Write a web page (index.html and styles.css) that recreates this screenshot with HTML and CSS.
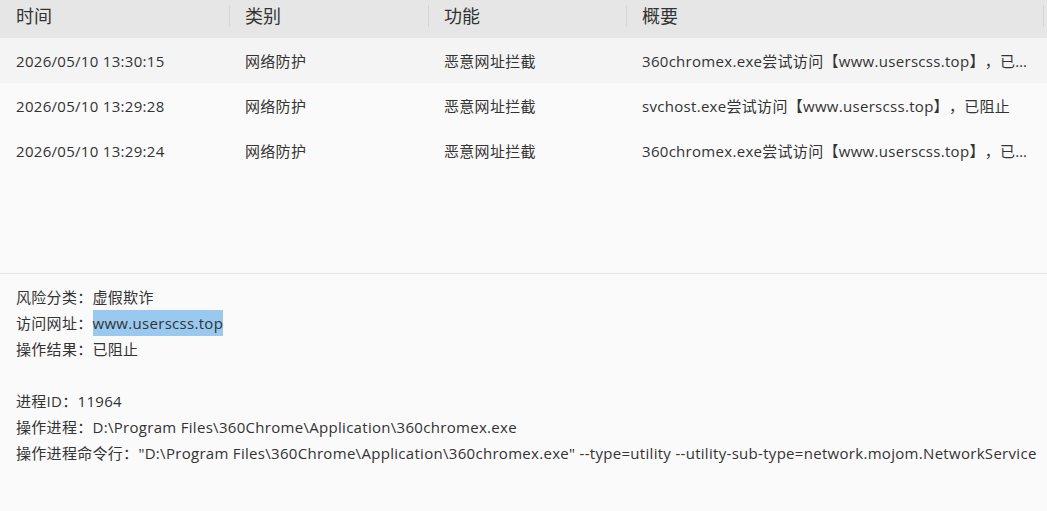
FILE: index.html
```html
<!DOCTYPE html>
<html lang="zh-CN">
  <head>
    <meta charset="UTF-8" />
    <meta name="viewport" content="width=device-width, initial-scale=1.0" />
    <title>防护日志</title>
    <link rel="stylesheet" href="styles.css">
  </head>

  <body>
    <div class="log-list">
      <div class="log-head">
        <div class="th first">时间</div>
        <div class="th">类别</div>
        <div class="th">功能</div>
        <div class="th">概要</div>
      </div>
      <div class="log-row active">
        <div class="td">2026/05/10 13:30:15</div>
        <div class="td">网络防护</div>
        <div class="td">恶意网址拦截</div>
        <div class="td">360chromex.exe尝试访问【www.userscss.top】，已阻止</div>
      </div>
      <div class="log-row">
        <div class="td">2026/05/10 13:29:28</div>
        <div class="td">网络防护</div>
        <div class="td">恶意网址拦截</div>
        <div class="td">svchost.exe尝试访问【www.userscss.top】，已阻止</div>
      </div>
      <div class="log-row">
        <div class="td">2026/05/10 13:29:24</div>
        <div class="td">网络防护</div>
        <div class="td">恶意网址拦截</div>
        <div class="td">360chromex.exe尝试访问【www.userscss.top】，已阻止</div>
      </div>
    </div>

    <div class="detail">
      <p>风险分类：虚假欺诈</p>
      <p>访问网址：<span class="selected">www.userscss.top</span></p>
      <p>操作结果：已阻止</p>
      <p class="gap"></p>
      <p>进程ID：11964</p>
      <p>操作进程：D:\Program Files\360Chrome\Application\360chromex.exe</p>
      <p>操作进程命令行："D:\Program Files\360Chrome\Application\360chromex.exe" --type=utility --utility-sub-type=network.mojom.NetworkService</p>
    </div>
  </body>
</html>
```

FILE: styles.css
```css
body {
  margin: 0;
  background: #fafafa;
  color: #333;
  font-family: "Open Sans", "Noto Sans CJK SC", sans-serif;
  font-size: 15px;
  letter-spacing: 0.3px;
  text-spacing-trim: space-all;
  overflow: hidden;
}

.log-list {
  height: 273px;
  border-bottom: 1px solid #e6e6e6;
}

.log-head,
.log-row {
  display: grid;
  grid-template-columns: 229px 199px 198px 417px 4px;
}

.log-head {
  background: #e6e6e6;
  height: 38px;
}

.th {
  margin-top: 5px;
  height: 22px;
  line-height: 22px;
  padding-left: 15px;
  border-left: 1px solid #d6d6d6;
  font-size: 18px;
  letter-spacing: 0;
}

.th.first {
  border-left: none;
  padding-left: 16px;
}

.log-head::after {
  content: "";
  margin-top: 5px;
  height: 22px;
  border-left: 1px solid #d6d6d6;
}

.log-row {
  height: 45px;
  align-items: center;
}

.log-row.active {
  background: #f4f4f4;
}

.td {
  padding: 0 16px;
  white-space: nowrap;
  overflow: hidden;
  text-overflow: ellipsis;
}

/* long command line runs past the window edge, as in the client */
.detail {
  padding: 10px 0 0 16px;
  white-space: nowrap;
  overflow: hidden;
}

.detail p {
  margin: 0;
  line-height: 26px;
  height: 26px;
}

.selected {
  background: #99c9ef;
  padding: 3px 0;
}
```
